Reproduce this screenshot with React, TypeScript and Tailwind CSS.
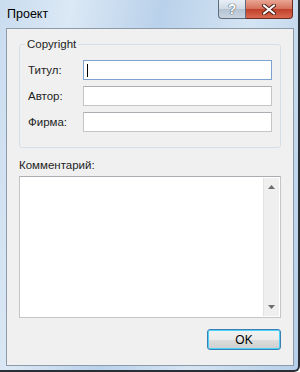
const font = { fontFamily: '"Liberation Sans", Arial, sans-serif' }

function Field({ label, focused }: { label: string; focused?: boolean }) {
  return (
    <div className="flex items-center h-[20px]">
      <div className="w-[55px] text-[11.5px] text-[#1e1e1e] pt-px">{label}</div>
      <div
        className={`relative w-[189px] h-[20px] bg-white border ${
          focused ? 'border-[#7da2ce]' : 'border-[#c5c5c5] border-t-[#abadb3]'
        }`}
      >
        {focused && <div className="absolute left-[3px] top-[3px] w-px h-[13px] bg-black" />}
      </div>
    </div>
  )
}

export default function App() {
  return (
    <div
      style={font}
      className="w-[300px] h-[372px] bg-[linear-gradient(100deg,#c9dcef_0%,#dbe8f5_20%,#b9d1ea_45%,#d4e4f3_70%,#b6cfe8_100%)] border-r-2 border-b-2 border-r-[#2a2f36] border-b-[#2a2f36] rounded-br-[6px] flex flex-col"
    >
      <div className="h-[28px] flex items-start relative">
        <div className="pl-[7px] pt-[5px] text-[12.5px] text-black">Проект</div>
        <div className="absolute right-[5px] top-0 flex">
          <div className="w-[28px] h-[19px] rounded-bl-[4px] border border-t-0 border-[#5e6b7a] bg-[linear-gradient(#e8eef5,#cfd9e4_50%,#b4c2d1_51%,#c9d4e0)] flex items-center justify-center text-[14px] font-bold text-white [text-shadow:0_0_1px_#2f3a48,0_0_1px_#2f3a48]">
            ?
          </div>
          <div className="w-[47px] h-[19px] rounded-br-[4px] border border-l-0 border-t-0 border-[#6b2a22] bg-[linear-gradient(#e8a593,#d4705a_50%,#c0402a_51%,#d86a50)] flex items-center justify-center">
            <svg width="14" height="11" viewBox="0 0 14 11">
              <path d="M2 1.5 L12 9.5 M12 1.5 L2 9.5" stroke="#4a1d16" strokeWidth="4" strokeLinecap="round" />
              <path d="M2 1.5 L12 9.5 M12 1.5 L2 9.5" stroke="#ffffff" strokeWidth="2.2" strokeLinecap="round" />
            </svg>
          </div>
        </div>
      </div>
      <div className="ml-[6px] mr-[4px] mb-[4px] flex-1 bg-[#f0f0f0] border border-[#8d9aaa] flex flex-col px-[12px] pt-[9px]">
        <div className="relative border border-[#d5dfe5] rounded-[3px] h-[104px] mt-[6px] pl-[8px] pr-[7px] pt-[15px] flex flex-col gap-[6px]">
          <div className="absolute left-[5px] -top-[8px] px-[2px] bg-[#f0f0f0] text-[11.5px] text-[#1e1e1e] leading-[14px]">
            Copyright
          </div>
          <Field label="Титул:" focused />
          <Field label="Автор:" />
          <Field label="Фирма:" />
        </div>
        <div className="mt-[10px] text-[11.5px] text-[#1e1e1e] leading-[14px]">Комментарий:</div>
        <div className="mt-[4px] h-[142px] bg-white border border-[#c5c5c5] border-t-[#abadb3] flex justify-end p-px">
          <div className="w-[16px] bg-[#efefef] border-l border-[#e3e3e3] flex flex-col justify-between items-center py-[7px]">
            <svg width="7" height="4" viewBox="0 0 7 4">
              <path d="M3.5 0 L7 4 L0 4 Z" fill="#6d6d6d" />
            </svg>
            <svg width="7" height="4" viewBox="0 0 7 4">
              <path d="M0 0 L7 0 L3.5 4 Z" fill="#6d6d6d" />
            </svg>
          </div>
        </div>
        <div className="flex justify-end mt-[11px]">
          <div className="w-[74px] h-[21px] rounded-[3px] border border-[#3c7fb1] shadow-[inset_0_0_0_1px_#48d2fb] bg-[linear-gradient(#f2f2f2,#ebebeb_50%,#dddddd_51%,#cfcfcf)] flex items-center justify-center text-[12px] text-black">
            OK
          </div>
        </div>
      </div>
    </div>
  )
}
